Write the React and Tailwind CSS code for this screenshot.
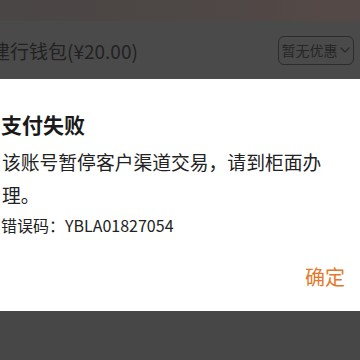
import React from "react";

const Chevron = () => (
  <svg width="12" height="12" viewBox="0 0 12 12" fill="none" className="ml-[1px]">
    <path d="M2 4l4 4 4-4" stroke="#2a2a2a" strokeWidth="1.3" strokeLinecap="round" strokeLinejoin="round" />
  </svg>
);

export default function App() {
  return (
    <div
      className="w-[360px] h-[360px] overflow-hidden flex flex-col bg-[#474747]"
      style={{ fontFamily: '"Noto Sans CJK SC", "Noto Sans", sans-serif' }}
    >
      <div className="h-[21px] bg-gradient-to-r from-[#4a4645] via-[#4d4745] to-[#554947]" />
      <div className="h-[58px] bg-[#4a4a4a] flex items-center justify-between pr-[6px]">
        <span className="ml-[-9px] text-[19px] leading-[24px] text-[#222] mt-[2px] whitespace-nowrap">建行钱包(¥20.00)</span>
        <button className="w-[76px] h-[29px] border border-[#2c2c2c] rounded-[6px] flex items-center justify-center text-[14px] text-[#262626]">
          暂无优惠
          <Chevron />
        </button>
      </div>
      <div className="h-[232px] bg-white flex flex-col">
        <div className="mt-[31px] pl-[1px] text-[21px] leading-[28px] font-bold text-[#1a1a1a]">支付失败</div>
        <div className="mt-[7px] pl-[2px] w-[340px] text-[18.8px] leading-[33px] text-[#222]">
          该账号暂停客户渠道交易，请到柜面办理。
        </div>
        <div className="mt-[2px] pl-[1px] text-[16px] leading-[24px] text-[#222]">错误码：YBLA01827054</div>
        <div className="mt-[26px] pr-[15px] flex justify-end">
          <span className="text-[20px] leading-[28px] text-[#e5792b]">确定</span>
        </div>
      </div>
      <div className="flex-1 bg-[#474747]" />
    </div>
  );
}
